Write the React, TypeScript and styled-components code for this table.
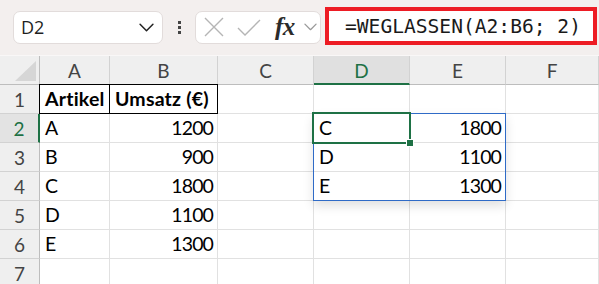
import styled, { createGlobalStyle } from "styled-components";

const GlobalStyle = createGlobalStyle`
    html, body {
        margin: 0;
        padding: 0;
        background: #ffffff;
        overflow: hidden;
    }
    * {
        box-sizing: border-box;
    }
`;

const GREEN = "#1e7145";
const GRID_LINE = "#e1e1e1";
const HEAD_LINE = "#d2d2d2";

const Page = styled.div`
    width: 599px;
    height: 284px;
    overflow: hidden;
    font-family: Lato, "Open Sans", sans-serif;
`;

/* ---------- formula toolbar ---------- */

const Toolbar = styled.div`
    height: 56px;
    background: #f3efee;
    border-bottom: 1px solid #f9f7f7;
    display: flex;
    align-items: center;
    padding: 0 2px 1px 13px;
`;

const NameBox = styled.div`
    width: 150px;
    height: 33px;
    background: #ffffff;
    border: 1px solid #e2dcdb;
    border-radius: 7px;
    display: flex;
    align-items: center;
    justify-content: space-between;
    padding: 0 8px 0 7px;
    font-family: "Open Sans", sans-serif;
    font-size: 18px;
    color: #1f1f1f;
`;

const Grip = styled.div`
    width: 32px;
    display: flex;
    flex-direction: column;
    align-items: center;
    gap: 2px;
    & > span {
        width: 3px;
        height: 3px;
        background: #444;
    }
`;

const EditTools = styled.div`
    width: 126px;
    height: 33px;
    background: #ffffff;
    border: 1px solid #e2dcdb;
    border-radius: 7px;
    display: flex;
    align-items: center;
    padding: 0 2px 0 8px;
    gap: 13px;
`;

const FxLabel = styled.span`
    font-family: "Liberation Serif", serif;
    font-style: italic;
    font-weight: bold;
    font-size: 25px;
    line-height: 1;
    color: #2b2b2b;
    margin: 0 -4px 2px 1px;
    letter-spacing: -0.5px;
`;

const FormulaBox = styled.div`
    flex: 1;
    height: 38px;
    margin-left: 4px;
    margin-top: -2px;
    border: 4px solid #ed1c24;
    background: #ffffff;
    display: flex;
    align-items: center;
    padding-left: 16px;
    font-family: "DejaVu Sans Mono", "Liberation Mono", monospace;
    font-size: 19.6px;
    color: #1a1a1a;
`;

/* ---------- sheet grid ---------- */

const Sheet = styled.div`
    display: grid;
    grid-template-columns: 40px 70px 108px 96px 96px 96px 1fr;
    grid-auto-rows: 29px;
`;

const Corner = styled.div`
    grid-row: 1;
    grid-column: 1;
    background: #efefef;
    border-right: 1px solid #bdbdbd;
    border-bottom: 1px solid #bdbdbd;
    display: flex;
    align-items: flex-end;
    justify-content: flex-end;
    padding: 0 3px 3px 0;
`;

const ColHead = styled.div<{ $c: number; $active?: boolean }>`
    grid-row: 1;
    grid-column: ${p => p.$c};
    background: ${p => (p.$active ? "#e0e0e0" : "#efefef")};
    border-right: 1px solid ${HEAD_LINE};
    border-bottom: ${p => (p.$active ? `2px solid ${GREEN}` : "1px solid #bdbdbd")};
    display: flex;
    align-items: center;
    justify-content: center;
    padding-top: ${p => (p.$active ? "1px" : "0")};
    font-size: 19px;
    color: ${p => (p.$active ? GREEN : "#444")};
`;

const RowHead = styled.div<{ $r: number; $active?: boolean }>`
    grid-row: ${p => p.$r};
    grid-column: 1;
    background: ${p => (p.$active ? "#e3e3e3" : "#efefef")};
    border-right: ${p => (p.$active ? `2px solid ${GREEN}` : "1px solid #bdbdbd")};
    border-bottom: 1px solid ${HEAD_LINE};
    display: flex;
    align-items: center;
    justify-content: center;
    font-size: 19px;
    color: ${p => (p.$active ? GREEN : "#444")};
`;

const Cell = styled.div<{ $r: number; $c: number; $right?: boolean; $bold?: boolean; $boxed?: boolean }>`
    position: relative;
    grid-row: ${p => p.$r};
    grid-column: ${p => p.$c};
    border-right: 1px solid ${GRID_LINE};
    border-bottom: 1px solid ${GRID_LINE};
    display: flex;
    align-items: flex-end;
    justify-content: ${p => (p.$right ? "flex-end" : "flex-start")};
    padding: 0 4px 3px 5px;
    font-size: 19.5px;
    font-weight: ${p => (p.$bold ? 700 : 400)};
    color: #000;
    white-space: nowrap;
    letter-spacing: ${p => (p.$right ? "-0.9px" : p.$bold ? "0.2px" : "0")};

    ${p => p.$boxed && `
        &::after {
            content: "";
            position: absolute;
            top: -1px;
            left: -1px;
            right: -1px;
            bottom: -1px;
            border: 1px solid #000;
        }
    `}
`;

/* spilled result range of the dynamic array formula */
const SpillRange = styled.div`
    grid-area: 3 / 5 / 6 / 7;
    margin: -1px 0 0 -1px;
    border: 1px solid #2f6bc7;
    box-shadow: 0 5px 10px rgba(0, 0, 0, 0.12);
    pointer-events: none;
    z-index: 1;
`;

const ActiveCell = styled.div`
    position: relative;
    grid-area: 3 / 5 / 4 / 6;
    margin: -2px -1px -1px -2px;
    border: 2px solid ${GREEN};
    pointer-events: none;
    z-index: 2;

    &::after {
        content: "";
        position: absolute;
        right: -5px;
        bottom: -5px;
        width: 6px;
        height: 6px;
        background: ${GREEN};
        border: 1px solid #fff;
    }
`;

function Chevron({ size = 14, color = "#333" }: { size?: number; color?: string }) {
    return (
        <svg width={size} height={size * 0.6} viewBox="0 0 14 8" fill="none">
            <path d="M1 1l6 6 6-6" stroke={color} strokeWidth="1.4" strokeLinecap="round" strokeLinejoin="round" />
        </svg>
    );
}

const columns = ["A", "B", "C", "D", "E", "F"];

const source: [string, string][] = [
    ["A", "1200"],
    ["B", "900"],
    ["C", "1800"],
    ["D", "1100"],
    ["E", "1300"],
];

const spilled: [string, string][] = [
    ["C", "1800"],
    ["D", "1100"],
    ["E", "1300"],
];

function App() {
    const rows = [1, 2, 3, 4, 5, 6, 7];

    return (
        <Page>
            <GlobalStyle />
            <Toolbar>
                <NameBox>
                    <span>D2</span>
                    <Chevron size={15} color="#222" />
                </NameBox>
                <Grip>
                    <span />
                    <span />
                    <span />
                </Grip>
                <EditTools>
                    <svg width="20" height="20" viewBox="0 0 20 20" fill="none">
                        <path d="M1 1l18 18M19 1L1 19" stroke="#b5b5b5" strokeWidth="1.4" />
                    </svg>
                    <svg width="24" height="17" viewBox="0 0 24 17" fill="none">
                        <path d="M1 9l7 7L23 1" stroke="#b5b5b5" strokeWidth="1.4" />
                    </svg>
                    <FxLabel>fx</FxLabel>
                    <Chevron size={13} color="#9a9a9a" />
                </EditTools>
                <FormulaBox>=WEGLASSEN(A2:B6; 2)</FormulaBox>
            </Toolbar>

            <Sheet>
                <Corner>
                    <svg width="21" height="20" viewBox="0 0 21 20">
                        <polygon points="21,0 21,20 0,20" fill="#d6d6d6" />
                    </svg>
                </Corner>
                {columns.map((col, i) => (
                    <ColHead key={col} $c={i + 2} $active={col === "D"}>
                        {col}
                    </ColHead>
                ))}

                {rows.map(r => (
                    <RowHead key={r} $r={r + 1} $active={r === 2}>
                        {r}
                    </RowHead>
                ))}

                {rows.map(r =>
                    columns.map((col, i) => {
                        const c = i + 2;
                        let text = "";
                        let right = false;
                        let bold = false;
                        let boxed = false;

                        if (r === 1 && col === "A") { text = "Artikel"; bold = true; boxed = true; }
                        if (r === 1 && col === "B") { text = "Umsatz (€)"; bold = true; boxed = true; }
                        if (r >= 2 && r <= 6 && col === "A") text = source[r - 2][0];
                        if (r >= 2 && r <= 6 && col === "B") { text = source[r - 2][1]; right = true; }
                        if (r >= 2 && r <= 4 && col === "D") text = spilled[r - 2][0];
                        if (r >= 2 && r <= 4 && col === "E") { text = spilled[r - 2][1]; right = true; }

                        return (
                            <Cell key={`${col}${r}`} $r={r + 1} $c={c} $right={right} $bold={bold} $boxed={boxed}>
                                {text}
                            </Cell>
                        );
                    })
                )}

                <SpillRange />
                <ActiveCell />
            </Sheet>
        </Page>
    );
}

export default App;
